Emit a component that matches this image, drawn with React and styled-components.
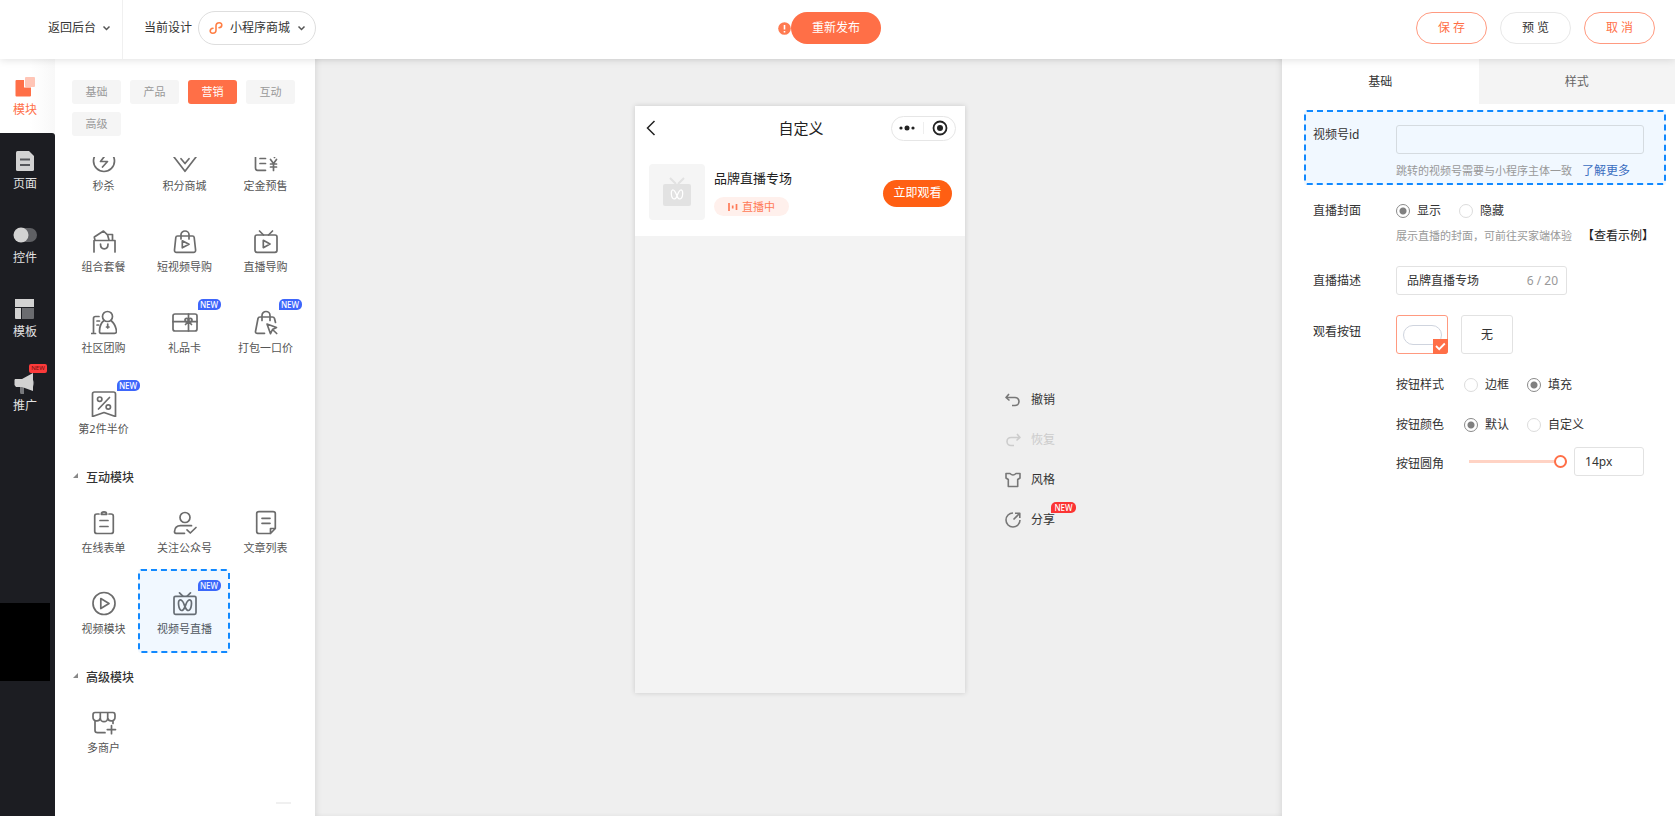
import React, { useState } from 'react';
import styled, { createGlobalStyle, css } from 'styled-components';

const ORANGE = '#ff6f47';

const Global = createGlobalStyle`
  *, *::before, *::after { box-sizing: border-box; }
  html, body, #root { height: 100%; }
  body {
    margin: 0;
    color: #333;
    background: #efefef;
    font: 12px/20px "Noto Sans", "Noto Sans CJK SC", sans-serif;
  }
  button, input { font: inherit; color: inherit; margin: 0; }
  button { padding: 0; border: 0; background: none; cursor: pointer; }
  svg { display: block; flex: none; }
  a { text-decoration: none; }
`;

const Page = styled.div`
  display: flex;
  flex-direction: column;
  min-height: 100%;
`;

/* ---------- header ---------- */

const Header = styled.header`
  display: grid;
  grid-template-columns: 1fr auto 1fr;
  height: 59px;
  padding-right: 20px;
  background: #fff;
  box-shadow: 0 1px 8px rgba(0, 0, 0, 0.12);
  position: relative;
  z-index: 2;
`;

const HeaderGroup = styled.div`
  display: flex;
  align-items: center;
  padding-bottom: 3px;
`;

const HeaderLeft = styled.div`
  display: flex;
`;

const BackButton = styled.button`
  display: flex;
  align-items: center;
  gap: 6px;
  padding: 0 11px 3px 48px;
  border-right: 1px solid #f0f0f0;
`;

const CurrentLabel = styled.span`
  margin: 0 6px 0 21px;
`;

const DesignPicker = styled.button`
  display: flex;
  align-items: center;
  gap: 7px;
  height: 34px;
  padding: 0 9px 0 10px;
  border: 1px solid #dedede;
  border-radius: 17px;
`;

const PublishArea = styled(HeaderGroup)`
  padding-left: 4px;
`;

const PublishButton = styled.button`
  width: 90px;
  height: 32px;
  border-radius: 16px;
  background: ${ORANGE};
  color: #fff;
`;

const HeaderActions = styled(HeaderGroup)`
  justify-content: flex-end;
  gap: 13px;
`;

const ActionButton = styled.button`
  width: 71px;
  height: 32px;
  border: 1px solid ${(p) => (p.$accent ? '#ff9a80' : '#e8e8e8')};
  border-radius: 16px;
  color: ${(p) => (p.$accent ? ORANGE : '#333')};
`;

/* ---------- body columns ---------- */

const Body = styled.div`
  display: flex;
  flex: 1;
`;

const SideNav = styled.nav`
  display: flex;
  flex-direction: column;
  width: 55px;
  background: linear-gradient(#fff 0 90px, #1c1d22 90px);
`;

const NavButton = styled.button`
  display: flex;
  flex-direction: column;
  align-items: center;
  justify-content: space-between;
  height: 74px;
  padding: 16px 5px 13px 0;
  color: ${(p) => (p.$active ? ORANGE : '#e2e2e2')};
  background: ${(p) => (p.$active ? 'linear-gradient(90deg, #fff 30px, #f8f8f8)' : '#1c1d22')};
  border-top-right-radius: ${(p) => (p.$first ? '3px' : '0')};
`;

const NavIcon = styled.span`
  display: grid;
  place-items: center;
  height: 24px;
  position: relative;
`;

const NavTag = styled.span`
  position: absolute;
  top: -7px;
  left: 15px;
  width: 18px;
  height: 9px;
  border-radius: 2px;
  background: #fb3a3a;
  color: #6b0f0f;
  font-size: 6px;
  line-height: 9px;
`;

const NavBlock = styled.div`
  width: 50px;
  height: 78px;
  margin-top: 174px;
  background: #000;
`;

const ModulePanel = styled.aside`
  width: 260px;
  background: #fff;
`;

const TabList = styled.div`
  display: flex;
  flex-wrap: wrap;
  gap: 8px 9px;
  padding: 21px 16px 21px 17px;
`;

const CategoryTab = styled.button`
  width: 49px;
  height: 24px;
  border-radius: 3px;
  font-size: 11px;
  color: ${(p) => (p.$active ? '#fff' : '#999')};
  background: ${(p) => (p.$active ? ORANGE : '#f5f5f5')};
`;

const Scroller = styled.div`
  overflow: hidden;
`;

const ScrolledContent = styled.div`
  margin-top: -30px;
  padding: 0 9px 0 8px;
`;

const ModuleGrid = styled.div`
  display: grid;
  grid-template-columns: repeat(3, 1fr);
`;

const ModuleButton = styled.button`
  display: flex;
  flex-direction: column;
  align-items: center;
  gap: 2px;
  height: 81px;
  padding-top: 21px;
  color: #555;
  font-size: 11px;
  position: relative;

  ${(p) => p.$selected && css`
    &::after {
      content: "";
      position: absolute;
      inset: -1px -5px -2px -6px;
      border: 2px dashed #1189ff;
      border-radius: 3px;
      background: rgba(17, 137, 255, 0.06);
    }
  `}
`;

const NewTag = styled.span`
  position: absolute;
  left: calc(50% + ${(p) => p.$shift || 13}px);
  top: ${(p) => p.$top || 10}px;
  width: ${(p) => p.$width || 23}px;
  height: 11px;
  border-radius: 5px 5px 5px 0;
  background: ${(p) => p.$color || '#3e66fb'};
  color: #fff;
  font-size: 8px;
  font-weight: 500;
  line-height: 11px;
  text-align: center;
`;

const SectionTitle = styled.h2`
  display: flex;
  align-items: center;
  gap: 8px;
  height: 38px;
  margin: 0;
  padding: 15px 0 0 10px;
  font-size: 12px;
  font-weight: 500;

  svg { margin-bottom: 5px; }
`;

const Divider = styled.hr`
  width: 15px;
  height: 2px;
  margin: 32px 15px 12px auto;
  border: 0;
  background: #f0f0f0;
`;

/* ---------- canvas ---------- */

const Canvas = styled.main`
  flex: 1;
  display: grid;
  grid-template-columns: 1fr 330px 1fr;
  column-gap: 40px;
  align-items: start;
  padding: 47px 0 0 3px;
  background: #efefef;
  box-shadow: inset 4px 0 6px -3px rgba(0, 0, 0, 0.1), inset -4px 0 6px -3px rgba(0, 0, 0, 0.1);
`;

const Phone = styled.section`
  grid-column: 2;
  min-height: 587px;
  background: #f3f3f3;
  box-shadow: 0 0 5px rgba(0, 0, 0, 0.16);
`;

const PhoneBar = styled.div`
  display: grid;
  grid-template-columns: 1fr auto 1fr;
  align-items: center;
  height: 45px;
  padding: 0 9px 1px 11px;
  background: #fff;
  color: #222;
  font-size: 15px;
`;

const PlainButton = styled.button`
  justify-self: start;
`;

const Capsule = styled.div`
  justify-self: end;
  display: flex;
  align-items: center;
  justify-content: center;
  gap: 8px;
  width: 65px;
  height: 25px;
  border: 1px solid #e6e6e6;
  border-radius: 13px;
`;

const CapsuleLine = styled.span`
  width: 1px;
  height: 12px;
  background: #eee;
`;

const LiveCard = styled.div`
  display: flex;
  align-items: center;
  gap: 9px;
  height: 85px;
  padding: 0 13px 3px 14px;
  background: #fff;
`;

const Cover = styled.div`
  display: grid;
  place-items: center;
  width: 56px;
  height: 56px;
  border-radius: 4px;
  background: #f5f5f5;
`;

const LiveInfo = styled.div`
  flex: 1;
  display: flex;
  flex-direction: column;
  align-items: flex-start;
  gap: 9px;
`;

const LiveTitle = styled.h3`
  margin: 0;
  font-size: 13px;
  font-weight: 400;
  color: #222;
`;

const LiveState = styled.span`
  display: flex;
  align-items: center;
  justify-content: center;
  gap: 4px;
  width: 75px;
  height: 19px;
  border-radius: 10px;
  background: #fff0ec;
  color: #ff7a57;
  font-size: 11px;
`;

const WatchButton = styled.button`
  width: 69px;
  height: 27px;
  margin-top: 2px;
  border-radius: 14px;
  background: #ff5f13;
  color: #fff;
`;

const Tools = styled.div`
  display: flex;
  flex-direction: column;
  align-items: flex-start;
  gap: 20px;
  padding-top: 284px;
`;

const ToolButton = styled.button`
  display: flex;
  align-items: center;
  gap: 10px;
  height: 20px;
  position: relative;

  &:disabled { color: #ccc; }
`;

/* ---------- settings ---------- */

const Settings = styled.aside`
  width: 393px;
  background: #fff;
`;

const SettingsTabs = styled.div`
  display: grid;
  grid-template-columns: 1fr 1fr;
`;

const SettingsTab = styled.button`
  height: 45px;
  color: ${(p) => (p.$active ? '#333' : '#666')};
  background: ${(p) => (p.$active ? '#fff' : '#f4f4f4')};
`;

const Form = styled.form`
  padding: 6px 9px 0 22px;
`;

const Row = styled.div`
  display: grid;
  grid-template-columns: 83px 1fr;
  align-items: start;
  padding: 0 0 0 9px;
  margin-bottom: ${(p) => p.$gap || 0}px;
`;

const FocusRow = styled(Row)`
  padding: 13px 0 2px 7px;
  border: 2px dashed #1189ff;
  border-radius: 3px;
  background: #f1f8ff;
`;

const FieldLabel = styled.label`
  padding-top: ${(p) => p.$top || 0}px;
`;

const Field = styled.div`
  display: flex;
  flex-direction: column;
  align-items: flex-start;
`;

const TextInput = styled.input`
  width: ${(p) => p.$width}px;
  height: 29px;
  padding: 0 10px;
  border: 1px solid ${(p) => (p.$muted ? '#d5dbe0' : '#e2e2e2')};
  border-radius: 3px;
  background: transparent;
  outline: none;
`;

const CountedInput = styled.span`
  display: flex;
  align-items: center;
  width: 171px;
  height: 29px;
  padding: 0 8px 0 10px;
  border: 1px solid #e2e2e2;
  border-radius: 3px;
  color: #999;

  input {
    flex: 1;
    min-width: 0;
    padding: 0;
    border: 0;
    outline: none;
    background: none;
    color: #333;
  }
`;

const Hint = styled.p`
  margin: ${(p) => p.$top}px 0 0;
  color: #999;
  font-size: 11px;
  white-space: nowrap;
`;

const HintLink = styled.a`
  margin-left: 10px;
  font-size: 12px;
  color: ${(p) => p.$color};
`;

const RadioGroup = styled.div`
  display: flex;
  gap: 18px;
  min-height: 20px;
`;

const RadioLabel = styled.label`
  display: flex;
  align-items: center;
  gap: 7px;

  input {
    appearance: none;
    width: 14px;
    height: 14px;
    border: 1px solid #dcdcdc;
    border-radius: 50%;
    background: #fff;
  }
  input:checked {
    border-color: #8a8a8a;
    background: radial-gradient(circle, #808080 3px, #fff 4px);
  }
`;

const Choices = styled.div`
  display: flex;
  gap: 13px;
`;

const Choice = styled.button`
  display: grid;
  place-items: center;
  width: 52px;
  height: 39px;
  border: 1px solid ${(p) => (p.$active ? '#ff9a80' : '#e2e2e2')};
  border-radius: 3px;
  position: relative;
`;

const PillSample = styled.span`
  width: 39px;
  height: 20px;
  border: 1px solid #cfd4de;
  border-radius: 10px;
`;

const Tick = styled.span`
  position: absolute;
  right: -1px;
  bottom: -1px;
  display: grid;
  place-items: center;
  width: 15px;
  height: 15px;
  background: ${ORANGE};
  border-bottom-right-radius: 3px;
`;

const SubRow = styled.div`
  display: flex;
  align-items: center;
  gap: 20px;
  height: 20px;
  margin-top: ${(p) => p.$top}px;
`;

const SliderRow = styled.div`
  display: flex;
  align-items: center;
  gap: 25px;
  margin-top: 12px;
`;

const SliderField = styled.div`
  display: flex;
  align-items: center;
  gap: 7px;
`;

const Slider = styled.input`
  appearance: none;
  width: 98px;
  height: 13px;
  background: linear-gradient(#ffd3c4, #ffd3c4) 0 5px / 100% 3px no-repeat;

  &::-webkit-slider-thumb {
    appearance: none;
    width: 13px;
    height: 13px;
    border: 2px solid ${ORANGE};
    border-radius: 50%;
    background: #fff;
  }
`;

/* ---------- drawings ---------- */

const MODULE_ICONS = {
  flash: <><circle cx="12" cy="12" r="10.5" /><path d="M13.5 6 8.5 12.5H15.500L10.500 18" /></>,
  diamond: <><path d="M5 2H19L23 8 12 22.300 1 8Z" /><path d="M8 9.700 12 14.500 16 9.700" /></>,
  deposit: <><path d="M11.500 21.300H3.500Q1.500 21.300 1.500 19V4Q1.500 2 3.500 2H20.500V8.500M6 9.500H11.500M6 14.500H11.500" /><path d="M16.500 10.500 19.500 14.500 22.500 10.500M19.500 14.500V21.500M16.500 15H22.500M16.500 18H22.500" /></>,
  combo: <><path d="M2 22V10.500H23V22M3 10.500 2.300 7 11.500 1 15.500 4.800 17 10M15.500 4.500H20.500V10.500" /><path d="M8.500 14C8.500 20.500 16 20.500 16 14" /></>,
  bagPlay: <><path d="M4.500 6H19.500Q21 6 21.200 7.500L22.600 20Q22.700 22.300 20.500 22.300H3.500Q1.300 22.300 1.500 20L2.800 7.500Q3 6 4.500 6Z" /><path d="M8 9V4.500A4 3.500 0 0 1 16 4.500V9M9.300 10.800 16 14.300 9.300 17.800Z" /></>,
  tvPlay: <><rect x="1" y="5" width="22" height="17.300" rx="2" /><path d="M5.500 1 9.500 5M18.500 1 14.500 5M9.300 10.300 16 14 9.300 17.700Z" /></>,
  community: <><path d="M-.5 22.500H3.500M1.500 22.500V7.500Q1.500 5.500 3.500 5.500H7M5 10H7.500M5 14H6.500" /><circle cx="15.500" cy="5.500" r="5" /><path d="M12 9.500Q7.500 13 7.500 20.500 7.500 22.300 9 22.300H22.500Q24.500 22.300 24.500 20.500 24 14 19 9.500M15.700 13V17M14.500 16H17" /></>,
  gift: <><rect x="0" y="3" width="24" height="17" rx="2" /><path d="M0 10.700H24M15.500 3V20M15.500 10.700 12.500 13.500M15.500 10.700 18.500 13.500" /><circle cx="13.700" cy="9" r="1.700" /><circle cx="17.300" cy="9" r="1.700" /></>,
  bagCursor: <><path d="M10.500 22.300H3.500Q1.300 22.300 1.500 20.500L4 7.500Q4.300 6 6 6H18.500Q20 6 20.500 7.500L21.500 11.500M8 9.500V4.500A4 4 0 0 1 16 4.500V9.500" /><path d="M13 13 22.500 16.500 18.500 18.500 16.500 22.700ZM18.500 18.500 22.700 22.500" /></>,
  half: <><path d="M2.500 0H21.500Q23.500 0 23.500 2V24.500L12 20.500 .5 24.500V2Q.5 0 2.500 0Z" /><path d="M17.500 5.500 6.500 17" /><circle cx="7.700" cy="7.200" r="2.200" /><circle cx="16.300" cy="15" r="2.200" /></>,
  form: <><path d="M7 3H5Q2.700 3 2.700 5V20.500Q2.700 22.500 5 22.500H19Q21.300 22.500 21.300 20.500V5Q21.300 3 19 3H17M8 9.500H16M8 15.500H16" /><path d="M9.300 3.300Q9.300 .8 12 .8T14.700 3.300Z" /></>,
  follow: <><circle cx="12" cy="6.500" r="5" /><path d="M11.500 22.300H3Q1.500 22.300 1.500 20.500 2 14.700 7.500 14.700H18.500M14 18.800 17.300 22 23 16.500" /></>,
  article: <><path d="M16.500 22.500H5Q2.700 22.500 2.700 20.500V2.500Q2.700 .7 5 .7H19Q21.300 .7 21.300 2.500V17.500L16.500 22.500V17.500H21.300M8 7.300H16M8 12.300H16" /></>,
  video: <><circle cx="12" cy="11.500" r="11" /><path d="M8.800 6.500 17 11.500 8.800 16.500Z" /></>,
  channel: <><rect x="1" y="4.300" width="22" height="18" rx="1.500" /><path d="M6.500 .8 9.800 4M17.500 .8 14.200 4M12 15C10.500 10 8.500 7.500 6.800 8 4.500 9 5.500 18 8.500 18.500 10 18.700 11 17 12 15 13.500 10 15.500 7.500 17.200 8 19.500 9 18.500 18 15.500 18.500 14 18.700 13 17 12 15Z" /></>,
  store: <><path d="M3 1.500H21Q23 1.500 23 4V6A3.700 3.700 0 0 1 15.700 7 3.700 3.700 0 0 1 8.300 7 3.700 3.700 0 0 1 1 6V4Q1 1.500 3 1.500ZM8.300 1.500V7M15.700 1.500V7M3 10V19.500Q3 21.700 5.500 21.700H13M21 10V12.500M19.500 14.500V22.700M15.300 18.600H23.500" /></>,
};

const ModuleIcon = ({ name }) => (
  <svg width="26" height="26" viewBox="-1 -1 26 26" fill="none" stroke="#6c6c6c" strokeWidth="1.7" strokeLinejoin="round" strokeLinecap="round">
    {MODULE_ICONS[name]}
  </svg>
);

const NAV_ICONS = {
  modules: <svg width="20" height="20"><path d="M1.500 3H9V10.500H16V18.500Q16 19.500 15 19.500H1.500Q.5 19.500.5 18.500V4Q.5 3 1.500 3Z" fill={ORANGE} /><rect x="10" y="0" width="10" height="10" rx="1" fill="#ffc5b6" /></svg>,
  pages: <svg width="18" height="20"><path d="M1.500 0H13L18 5V18.500Q18 20 16.500 20H1.500Q0 20 0 18.500V1.500Q0 0 1.500 0Z" fill="#d2d2d2" /><path d="M4 8.500H14M4 14H14" stroke="#55565a" strokeWidth="2" /></svg>,
  controls: <svg width="24" height="16"><rect x="1" y="1" width="23" height="14" rx="7" fill="#5f6064" /><circle cx="8" cy="8" r="7.500" fill="#d2d2d2" /></svg>,
  templates: <svg width="20" height="20"><path d="M0 0H19V8H0ZM0 9H6V20H1Q0 20 0 19Z" fill="#d2d2d2" /><path d="M7 9H19V19Q19 20 18 20H7Z" fill="#6b6c70" /></svg>,
  promote: <svg width="22" height="22"><path d="M17 6Q22 9 19 15L17 17ZM6 14H10V22H7Q6 22 6 20Z" fill="#77787c" /><path d="M1 7H8L19 1V19L8 15H2L.5 13V8Z" fill="#d2d2d2" /></svg>,
};

const Chevron = () => (
  <svg width="9" height="7" fill="none" stroke="#555" strokeWidth="1.500"><path d="M1.500 1.500 4.500 4.500 7.500 1.500" /></svg>
);

const MiniProgramLogo = () => (
  <svg width="14" height="14" fill="none" stroke="#ff7f45" strokeWidth="1.600" strokeLinecap="round">
    <path d="M4 7.200C.5 7.500 .2 12.300 3.700 12.300 5.700 12.300 7 11 7 9V5C7 3 8.300 1.700 10.300 1.700 13.800 1.700 13.500 6.500 10 6.800" />
  </svg>
);

const AlertIcon = () => (
  <svg width="13" height="13"><circle cx="6.500" cy="6.500" r="6.300" fill="#ff7a50" /><path d="M6.500 3V7.500M6.500 9V10.500" stroke="#fff" strokeWidth="1.600" /></svg>
);

const TOOL_ICONS = {
  undo: <path d="M4 2 1 5.500 4.500 8.500M1.500 5.500H10A4 4 0 0 1 10 13.500H7" />,
  redo: <path d="M12 2 15 5.500 11.500 8.500M14.500 5.500H6A4 4 0 0 0 6 13.500H9" />,
  style: <path d="M1 1.500H5Q8 4.500 11 1.500H15V6L12.700 7.500V14.500H3.300V7.500L1 6Z" />,
  share: <path d="M8 1A7 7 0 1 0 15 8M8.500 7.500 14.500 1.500M10 1.200H14.800V6" />,
};

const ToolIcon = ({ name, muted }) => (
  <svg width="16" height="16" fill="none" stroke={muted ? '#ccc' : '#777'} strokeWidth="1.600" strokeLinejoin="round">{TOOL_ICONS[name]}</svg>
);

/* ---------- content ---------- */

const NAV = [
  ['modules', '模块'],
  ['pages', '页面'],
  ['controls', '控件'],
  ['templates', '模板'],
  ['promote', '推广', true],
];

const CATEGORIES = ['基础', '产品', '营销', '互动', '高级'];

const MARKETING = [
  ['flash', '秒杀'], ['diamond', '积分商城'], ['deposit', '定金预售'],
  ['combo', '组合套餐'], ['bagPlay', '短视频导购'], ['tvPlay', '直播导购'],
  ['community', '社区团购'], ['gift', '礼品卡', true], ['bagCursor', '打包一口价', true],
  ['half', '第2件半价', true],
];

const INTERACTIVE = [
  ['form', '在线表单'], ['follow', '关注公众号'], ['article', '文章列表'],
  ['video', '视频模块'], ['channel', '视频号直播', true],
];

const ADVANCED = [['store', '多商户']];

const Modules = ({ items, selected }) => (
  <ModuleGrid>
    {items.map(([icon, label, isNew]) => (
      <ModuleButton key={icon} type="button" $selected={selected === icon}>
        <ModuleIcon name={icon} />
        {label}
        {isNew && <NewTag>NEW</NewTag>}
      </ModuleButton>
    ))}
  </ModuleGrid>
);

const Section = ({ children }) => (
  <SectionTitle>
    <svg width="5" height="5"><path d="M5 0V5H0Z" fill="#888" /></svg>
    {children}
  </SectionTitle>
);

const Radios = ({ name, label, options, initial }) => {
  const [value, setValue] = useState(initial);
  return (
    <RadioGroup role="radiogroup" aria-label={label}>
      {options.map((option) => (
        <RadioLabel key={option}>
          <input type="radio" name={name} checked={value === option} onChange={() => setValue(option)} />
          {option}
        </RadioLabel>
      ))}
    </RadioGroup>
  );
};

export default function App() {
  const [category, setCategory] = useState('营销');
  const [description, setDescription] = useState('品牌直播专场');
  const [radius, setRadius] = useState(14);

  return (
    <Page>
      <Global />
      <Header>
        <HeaderLeft>
          <BackButton type="button">返回后台<Chevron /></BackButton>
          <HeaderGroup>
            <CurrentLabel>当前设计</CurrentLabel>
            <DesignPicker type="button"><MiniProgramLogo />小程序商城<Chevron /></DesignPicker>
          </HeaderGroup>
        </HeaderLeft>
        <PublishArea>
          <AlertIcon />
          <PublishButton type="button">重新发布</PublishButton>
        </PublishArea>
        <HeaderActions>
          <ActionButton type="button" $accent>保 存</ActionButton>
          <ActionButton type="button">预 览</ActionButton>
          <ActionButton type="button" $accent>取 消</ActionButton>
        </HeaderActions>
      </Header>

      <Body>
        <SideNav>
          {NAV.map(([icon, label, isNew], index) => (
            <NavButton key={icon} type="button" $active={index === 0} $first={index === 1}>
              <NavIcon>{NAV_ICONS[icon]}{isNew && <NavTag>NEW</NavTag>}</NavIcon>
              {label}
            </NavButton>
          ))}
          <NavBlock />
        </SideNav>

        <ModulePanel>
          <TabList>
            {CATEGORIES.map((name) => (
              <CategoryTab key={name} type="button" $active={name === category} onClick={() => setCategory(name)}>{name}</CategoryTab>
            ))}
          </TabList>
          <Scroller>
            <ScrolledContent>
              <Modules items={MARKETING} />
              <Section>互动模块</Section>
              <Modules items={INTERACTIVE} selected="channel" />
              <Section>高级模块</Section>
              <Modules items={ADVANCED} />
              <Divider />
            </ScrolledContent>
          </Scroller>
        </ModulePanel>

        <Canvas>
          <Phone>
            <PhoneBar>
              <PlainButton type="button" aria-label="返回">
                <svg width="10" height="16" fill="none" stroke="#222" strokeWidth="1.500"><path d="M8.500 1 1.500 8 8.500 15" /></svg>
              </PlainButton>
              自定义
              <Capsule>
                <svg width="16" height="6" fill="#222"><circle cx="2" cy="3" r="1.600" /><circle cx="8" cy="3" r="2.500" /><circle cx="14" cy="3" r="1.600" /></svg>
                <CapsuleLine />
                <svg width="16" height="16"><circle cx="8" cy="8" r="6.500" fill="none" stroke="#222" strokeWidth="1.800" /><circle cx="8" cy="8" r="3" fill="#222" /></svg>
              </Capsule>
            </PhoneBar>
            <LiveCard>
              <Cover>
                <svg width="30" height="30" fill="none">
                  <path d="M8 1 14 7M22 1 16 7" stroke="#e2e2e2" strokeWidth="2" />
                  <rect x="1" y="7" width="28" height="22" rx="2" fill="#e2e2e2" />
                  <path d="M15 19C13.500 15 12 12.500 10.500 13 8.500 14 9 21.500 12 22 13.500 22 14.500 20.500 15 19 16.500 15 18 12.500 19.500 13 21.500 14 21 21.500 18 22 16.500 22 15.500 20.500 15 19Z" stroke="#fff" strokeWidth="1.200" />
                </svg>
              </Cover>
              <LiveInfo>
                <LiveTitle>品牌直播专场</LiveTitle>
                <LiveState>
                  <svg width="10" height="8" stroke="#ff7a57" strokeWidth="1.700"><path d="M1 0V8M4.700 2.500V5.500M8.500 1V7" /></svg>
                  直播中
                </LiveState>
              </LiveInfo>
              <WatchButton type="button">立即观看</WatchButton>
            </LiveCard>
          </Phone>
          <Tools>
            <ToolButton type="button"><ToolIcon name="undo" />撤销</ToolButton>
            <ToolButton type="button" disabled><ToolIcon name="redo" muted />恢复</ToolButton>
            <ToolButton type="button"><ToolIcon name="style" />风格</ToolButton>
            <ToolButton type="button">
              <ToolIcon name="share" />分享
              <NewTag $color="#fb3434" $shift={21} $top={-8} $width={25}>NEW</NewTag>
            </ToolButton>
          </Tools>
        </Canvas>

        <Settings>
          <SettingsTabs>
            <SettingsTab type="button" $active>基础</SettingsTab>
            <SettingsTab type="button">样式</SettingsTab>
          </SettingsTabs>
          <Form>
            <FocusRow $gap={16}>
              <FieldLabel htmlFor="channel-id">视频号id</FieldLabel>
              <Field>
                <TextInput id="channel-id" $width={248} $muted />
                <Hint $top={7}>跳转的视频号需要与小程序主体一致<HintLink href="#more" $color="#3a6dc0">了解更多</HintLink></Hint>
              </Field>
            </FocusRow>
            <Row $gap={20}>
              <span>直播封面</span>
              <Field>
                <Radios name="cover" label="直播封面" options={['显示', '隐藏']} initial="显示" />
                <Hint $top={5}>展示直播的封面，可前往买家端体验<HintLink href="#sample" $color="#222">【查看示例】</HintLink></Hint>
              </Field>
            </Row>
            <Row $gap={20}>
              <FieldLabel htmlFor="live-text" $top={5}>直播描述</FieldLabel>
              <Field>
                <CountedInput>
                  <input id="live-text" maxLength={20} value={description} onChange={(e) => setDescription(e.target.value)} />
                  {description.length} / 20
                </CountedInput>
              </Field>
            </Row>
            <Row>
              <FieldLabel as="span" $top={7}>观看按钮</FieldLabel>
              <Field>
                <Choices>
                  <Choice type="button" $active aria-label="按钮">
                    <PillSample />
                    <Tick><svg width="11" height="9" fill="none" stroke="#fff" strokeWidth="1.800"><path d="M1 4 4.200 7.200 9.800 1.500" /></svg></Tick>
                  </Choice>
                  <Choice type="button">无</Choice>
                </Choices>
                <SubRow $top={21}>
                  按钮样式
                  <Radios name="fill" label="按钮样式" options={['边框', '填充']} initial="填充" />
                </SubRow>
                <SubRow $top={20}>
                  按钮颜色
                  <Radios name="color" label="按钮颜色" options={['默认', '自定义']} initial="默认" />
                </SubRow>
                <SliderRow>
                  <FieldLabel htmlFor="radius" $top={4}>按钮圆角</FieldLabel>
                  <SliderField>
                    <Slider id="radius" type="range" min="0" max="14" value={radius} onChange={(e) => setRadius(Number(e.target.value))} />
                    <TextInput aria-label="圆角数值" $width={70} value={`${radius}px`} readOnly />
                  </SliderField>
                </SliderRow>
              </Field>
            </Row>
          </Form>
        </Settings>
      </Body>
    </Page>
  );
}
